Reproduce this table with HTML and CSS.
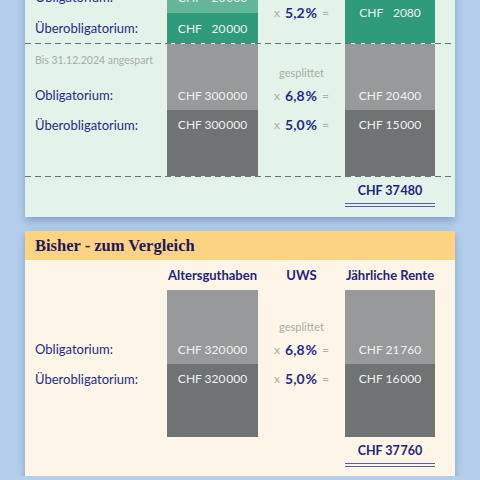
FILE: index.html
```
<!DOCTYPE html>
<html lang="de">
<head>
    <meta charset="UTF-8">
    <meta name="viewport" content="width=device-width, initial-scale=1.0">
    <title>Rentenvergleich</title>
    <link rel="stylesheet" href="styles.css">
</head>
<body>
    <div class="page">
        <!-- neue Regelung (oben abgeschnitten) -->
        <div class="card card-new">
            <div class="grid grid-split">
                <div class="label r1">Obligatorium:</div>
                <div class="box green-1 r1 c2">CHF &#8199;20&#8202;000</div>
                <div class="label r2">Überobligatorium:</div>
                <div class="box green-2 r2 c2">CHF &#8199;20&#8202;000</div>
                <div class="uws span-12 c3 middle"><span class="op">x</span> <b>5,2&#8202;%</b> <span class="op">=</span></div>
                <div class="box green-2 span-12 c4 middle">CHF &#8199;2080</div>
            </div>

            <div class="dashed"></div>

            <div class="grid grid-old">
                <div class="note r1">Bis 31.12.2024 angespart</div>
                <div class="box gray-1 r1 c2"></div>
                <div class="uws r1 c3 bottom"><span class="small">gesplittet</span></div>
                <div class="box gray-1 r1 c4"></div>

                <div class="label r2">Obligatorium:</div>
                <div class="box gray-1 r2 c2">CHF 300&#8202;000</div>
                <div class="uws r2 c3"><span class="op">x</span> <b>6,8&#8202;%</b> <span class="op">=</span></div>
                <div class="box gray-1 r2 c4">CHF 20&#8202;400</div>

                <div class="label r3 top">Überobligatorium:</div>
                <div class="box gray-2 r3 c2 top">CHF 300&#8202;000</div>
                <div class="uws r3 c3 top"><span class="op">x</span> <b>5,0&#8202;%</b> <span class="op">=</span></div>
                <div class="box gray-2 r3 c4 top">CHF 15&#8202;000</div>
            </div>

            <div class="dashed"></div>

            <div class="total-row">
                <div class="total">CHF 37&#8202;480</div>
            </div>
        </div>

        <!-- bisherige Regelung -->
        <div class="card card-old">
            <div class="card-head">Bisher - zum Vergleich</div>
            <div class="grid grid-compare">
                <div class="col-head r1 c2">Altersguthaben</div>
                <div class="col-head r1 c3">UWS</div>
                <div class="col-head r1 c4">Jährliche Rente</div>

                <div class="box gray-1 r2 c2"></div>
                <div class="uws r2 c3 bottom"><span class="small">gesplittet</span></div>
                <div class="box gray-1 r2 c4"></div>

                <div class="label r3">Obligatorium:</div>
                <div class="box gray-1 r3 c2">CHF 320&#8202;000</div>
                <div class="uws r3 c3"><span class="op">x</span> <b>6,8&#8202;%</b> <span class="op">=</span></div>
                <div class="box gray-1 r3 c4">CHF 21&#8202;760</div>

                <div class="label r4 top">Überobligatorium:</div>
                <div class="box gray-2 r4 c2 top">CHF 320&#8202;000</div>
                <div class="uws r4 c3 top"><span class="op">x</span> <b>5,0&#8202;%</b> <span class="op">=</span></div>
                <div class="box gray-2 r4 c4 top">CHF 16&#8202;000</div>
            </div>

            <div class="total-row last">
                <div class="total">CHF 37&#8202;760</div>
            </div>
        </div>
    </div>
</body>
</html>
```

FILE: styles.css
```
body {
    margin: 0;
    background-color: #b4ceec;
    font-family: 'Lato', 'Liberation Sans', sans-serif;
    font-size: 13px;
    color: #262c86;
    overflow: hidden;
}

.page {
    width: 430px;
    margin-left: 25px;
}

.card {
    box-shadow: 0 4px 8px rgba(50, 80, 130, 0.35);
}

.card-new {
    background-color: #e3f3ea;
    margin-top: -19px;
}

.card-old {
    background-color: #fdf5e7;
    margin-top: 14px;
}

.card-head {
    height: 29px;
    line-height: 29px;
    padding-left: 10px;
    background-color: #fcd283;
    font-family: 'Liberation Serif', serif;
    font-weight: bold;
    font-size: 16.5px;
    color: #1c1a5a;
}

/* Raster: Label | Guthaben | UWS | Rente */
.grid {
    display: grid;
    grid-template-columns: 132px 91px 87px 90px;
    padding: 0 20px 0 10px;
}

.grid-split   { grid-template-rows: 32px 30px; }
.grid-old     { grid-template-rows: 36px 30px 66px; }
.grid-compare { grid-template-rows: 30px 44px 30px 73px; }

.r1 { grid-row: 1; }
.r2 { grid-row: 2; }
.r3 { grid-row: 3; }
.r4 { grid-row: 4; }
.span-12 { grid-row: 1 / 3; }
.c2 { grid-column: 2; }
.c3 { grid-column: 3; }
.c4 { grid-column: 4; }

.label {
    grid-column: 1;
    display: flex;
    align-items: center;
}

.box,
.uws,
.col-head {
    display: flex;
    align-items: center;
    justify-content: center;
    white-space: pre;
}

.top {
    align-items: flex-start;
    line-height: 30px;
}

.bottom {
    align-items: flex-end;
}

.middle {
    align-items: center;
}

.box {
    color: #eef1ef;
    font-size: 12px;
}

.green-1 { background-color: #63b698; }
.green-2 { background-color: #2f9b7b; }
.gray-1  { background-color: #97999a; }
.gray-2  { background-color: #6f7373; }

.uws b {
    font-weight: bold;
    font-size: 14px;
    color: #262c86;
    margin: 0 5px;
}

.op {
    color: #a7ada9;
    font-size: 12px;
}

.small {
    color: #a7ada9;
    font-size: 11px;
    line-height: 14px;
}

.note {
    grid-column: 1;
    padding-top: 8px;
    line-height: 16px;
    font-size: 10.5px;
    white-space: nowrap;
    color: #a7ada9;
}

.col-head {
    font-weight: bold;
    color: #1f2478;
}

.dashed {
    height: 1px;
    background: repeating-linear-gradient(to right, #6b7283 0 6px, transparent 6px 10px);
}

.total-row {
    display: flex;
    justify-content: flex-end;
    padding: 7px 20px 13px 0;
}

.total-row.last {
    padding-bottom: 12px;
}

.total {
    width: 90px;
    text-align: center;
    line-height: 14px;
    font-weight: bold;
    font-size: 12.5px;
    color: #1f2478;
    padding-bottom: 5px;
    border-bottom: 1px solid #5660a6;
    position: relative;
}

.total::after {
    content: "";
    position: absolute;
    left: 0;
    right: 0;
    bottom: -4px;
    border-bottom: 1px solid #5660a6;
}
```
